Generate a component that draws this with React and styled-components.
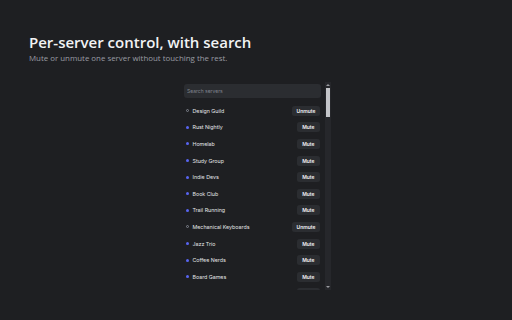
import React from "react";
import styled, { createGlobalStyle } from "styled-components";

const servers = [
  { name: "Design Guild", muted: true },
  { name: "Rust Nightly", muted: false },
  { name: "Homelab", muted: false },
  { name: "Study Group", muted: false },
  { name: "Indie Devs", muted: false },
  { name: "Book Club", muted: false },
  { name: "Trail Running", muted: false },
  { name: "Mechanical Keyboards", muted: true },
  { name: "Jazz Trio", muted: false },
  { name: "Coffee Nerds", muted: false },
  { name: "Board Games", muted: false },
  { name: "Film Club", muted: false },
  { name: "Photo Walks", muted: false },
  { name: "Speedrunners", muted: true },
];

const GlobalStyle = createGlobalStyle`
  html, body {
    margin: 0;
    background: #1e1f22;
    color: #f2f3f5;
    font-family: "Open Sans", "Noto Sans", sans-serif;
  }
`;

const Page = styled.div`
  width: 512px;
  height: 320px;
  box-sizing: border-box;
  padding: 31px 29px 0;
  display: flex;
  flex-direction: column;
`;

const Title = styled.h1`
  margin: 0;
  font-size: 15px;
  line-height: 22px;
  font-weight: 600;
  color: #f2f3f5;
`;

const Subtitle = styled.p`
  margin: 0;
  font-size: 7.9px;
  line-height: 10px;
  color: #9a9ca3;
`;

const Panel = styled.div`
  align-self: center;
  margin-top: 19px;
  width: 150px;
  height: 208px;
  display: flex;
  font-family: Inter, "Liberation Sans", sans-serif;
`;

const List = styled.div`
  flex: 1;
  min-width: 0;
  box-sizing: border-box;
  padding: 2px 4px 0 3px;
  overflow: hidden;
`;

const Track = styled.div`
  width: 6px;
  flex: none;
  background: #26272b;
  display: flex;
  flex-direction: column;
  align-items: center;
`;

const Arrow = styled.span`
  flex: none;
  width: 0;
  height: 0;
  margin: 2px 0 1px;
  border-left: 2px solid transparent;
  border-right: 2px solid transparent;
  ${(p) =>
    p.$down
      ? "border-top: 2.5px solid #9a9ba0; margin-top: auto; margin-bottom: 2px;"
      : "border-bottom: 2.5px solid #9a9ba0;"}
`;

const Thumb = styled.span`
  flex: none;
  width: 4px;
  height: 29px;
  margin-top: 1px;
  background: #c4c5c9;
`;

const Search = styled.input`
  display: block;
  width: 100%;
  height: 14px;
  box-sizing: border-box;
  border: none;
  outline: none;
  border-radius: 3px;
  background: #2b2d31;
  padding: 0 3px;
  font-family: inherit;
  font-size: 5px;
  color: #dbdee1;
  margin-bottom: 4.5px;

  &::placeholder {
    color: #80848e;
  }
`;

const Row = styled.div`
  display: flex;
  align-items: center;
  height: 16.6px;
  padding: 0 1px 0 2px;
`;

const Dot = styled.span`
  width: 3px;
  height: 3px;
  border-radius: 50%;
  box-sizing: border-box;
  flex: none;
  background: ${(p) => (p.$muted ? "transparent" : "#5865f2")};
  border: ${(p) => (p.$muted ? "0.7px solid #80848e" : "none")};
  margin-right: 3.5px;
`;

const Name = styled.span`
  flex: 1;
  font-size: 5.3px;
  color: #e3e5e8;
  white-space: nowrap;
`;

const Toggle = styled.button`
  height: 10px;
  border: none;
  border-radius: 2.5px;
  background: #2b2d31;
  color: #f2f3f5;
  font-family: inherit;
  font-size: 5px;
  font-weight: 600;
  padding: 0 ${(p) => (p.$muted ? "4.5px" : "5.5px")};
  cursor: pointer;
`;

export default function App() {
  return (
    <>
      <GlobalStyle />
      <Page>
        <Title>Per-server control, with search</Title>
        <Subtitle>Mute or unmute one server without touching the rest.</Subtitle>
        <Panel>
          <List>
            <Search placeholder="Search servers" />
            {servers.map((s) => (
              <Row key={s.name}>
                <Dot $muted={s.muted} />
                <Name>{s.name}</Name>
                <Toggle $muted={s.muted}>{s.muted ? "Unmute" : "Mute"}</Toggle>
              </Row>
            ))}
          </List>
          <Track>
            <Arrow />
            <Thumb />
            <Arrow $down />
          </Track>
        </Panel>
      </Page>
    </>
  );
}
